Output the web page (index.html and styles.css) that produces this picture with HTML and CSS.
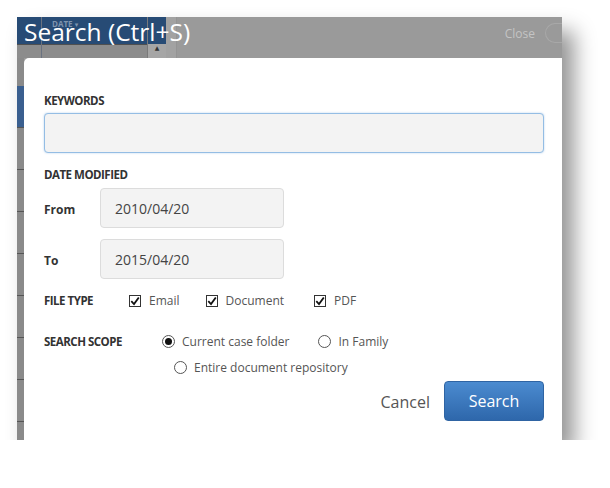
FILE: index.html
```html
<!DOCTYPE html>
<html>
   <head>
      <meta charset="UTF-8">
      <meta name="viewport" content="width=device-width, initial-scale=1.0"/>
      <title>Search</title>
      <link rel="stylesheet" href="styles.css">
   </head>
   <body>
      <div class="shot">
         <div class="top">
            <div class="app-head">
               <div class="app-grid">
                  <span class="col-date">DATE <span class="caret">&#9662;</span></span>
               </div>
               <div class="app-scroll"><span class="arrow">&#9650;</span></div>
               <div class="app-gap"></div>
            </div>
            <div class="title-bar">
               <h1>Search (Ctrl+S)</h1>
               <div class="close-wrap">
                  <span class="close">Close</span>
                  <span class="close-ring"></span>
               </div>
            </div>
         </div>

         <div class="main">
            <div class="app-rows">
               <div class="row"></div>
               <div class="row row-sel"></div>
               <div class="row"></div>
               <div class="row"></div>
               <div class="row"></div>
               <div class="row"></div>
               <div class="row"></div>
               <div class="row"></div>
               <div class="row"></div>
            </div>

            <form class="dialog">
               <label class="caption" for="keywords">KEYWORDS</label>
               <input id="keywords" class="field field-focus" type="text">

               <div class="caption caption-date">DATE MODIFIED</div>
               <div class="date-row">
                  <label class="sub" for="from">From</label>
                  <input id="from" class="field date" type="text" value="2010/04/20">
               </div>
               <div class="date-row">
                  <label class="sub sub-to" for="to">To</label>
                  <input id="to" class="field date" type="text" value="2015/04/20">
               </div>

               <div class="opt-row filetype">
                  <span class="caption caption-inline">FILE TYPE</span>
                  <label class="opt opt-email"><span class="box"><svg width="10" height="10" viewBox="0 0 10 10"><path d="M1.3 5.2 L4 8 L8.8 1.5" fill="none" stroke="#111" stroke-width="1.8"/></svg></span>Email</label>
                  <label class="opt opt-doc"><span class="box"><svg width="10" height="10" viewBox="0 0 10 10"><path d="M1.3 5.2 L4 8 L8.8 1.5" fill="none" stroke="#111" stroke-width="1.8"/></svg></span>Document</label>
                  <label class="opt"><span class="box"><svg width="10" height="10" viewBox="0 0 10 10"><path d="M1.3 5.2 L4 8 L8.8 1.5" fill="none" stroke="#111" stroke-width="1.8"/></svg></span>PDF</label>
               </div>

               <div class="opt-row scope">
                  <span class="caption caption-inline caption-scope">SEARCH SCOPE</span>
                  <label class="opt opt-current"><span class="radio on"></span>Current case folder</label>
                  <label class="opt"><span class="radio"></span>In Family</label>
               </div>
               <div class="opt-row scope-2">
                  <label class="opt"><span class="radio"></span>Entire document repository</label>
               </div>

               <div class="actions">
                  <button type="button" class="btn-cancel">Cancel</button>
                  <button type="button" class="btn-search">Search</button>
               </div>
            </form>
         </div>
      </div>
   </body>
</html>
```

FILE: styles.css
```css
*
{
   box-sizing: border-box;
}

body
{
   margin: 0;
   padding: 17px 0 0 17px;
   background: #ffffff;
   font-family: "Open Sans", "DejaVu Sans", sans-serif;
}

.shot
{
   width: 545px;
   height: 423px;
   background: #9a9a9a;
   box-shadow: 12px 14px 20px rgba(0, 0, 0, 0.42);
}

/* header: background app and the modal title share one grid cell */
.top
{
   display: grid;
   height: 41px;
}

.app-head,
.title-bar
{
   grid-area: 1 / 1;
}

.app-head
{
   display: flex;
}

.app-grid
{
   width: 131px;
   background: linear-gradient(#274b75 0, #274b75 27px, #505050 27px, #505050 28px, #8c8c8c 28px);
   border-right: 1px solid #7a7a7a;
   padding-left: 24px;
}

.col-date
{
   display: block;
   height: 100%;
   margin: 0;
   padding: 1px 0 0 10px;
   border-left: 1px solid #6a7280;
   font-size: 8px;
   font-weight: bold;
   color: #7f94ae;
}

.caret
{
   font-size: 7px;
}

.app-scroll
{
   width: 18px;
   background: linear-gradient(#274b75 0, #274b75 27px, #a6a6a6 27px);
   text-align: center;
}

.arrow
{
   display: block;
   margin-top: 27px;
   font-size: 6px;
   color: #333333;
}

.app-gap
{
   width: 11px;
   background: #a2a2a2;
   border-right: 1px solid #949494;
}

.title-bar
{
   position: relative;
   z-index: 1;
   display: flex;
   align-items: flex-start;
   justify-content: space-between;
   padding: 0 0 0 7px;
}

h1
{
   margin: 0;
   font-size: 24.5px;
   font-weight: normal;
   line-height: 30px;
   color: #ffffff;
}

.close-wrap
{
   display: flex;
   align-items: center;
   margin-top: 6px;
}

.close
{
   font-size: 12px;
   color: #c4c4c4;
   margin-right: 10px;
}

/* the close ring is cut by the right edge of the shot */
.close-ring
{
   width: 17px;
   height: 20px;
   border: 1px solid #a8a8a8;
   border-right: none;
   border-radius: 10px 0 0 10px;
}

.main
{
   display: flex;
   height: 382px;
}

.app-rows
{
   width: 7px;
   flex: none;
   background: #8a8a8a;
   display: flex;
   flex-direction: column;
}

.row
{
   height: 42px;
   flex: none;
   border-bottom: 1px solid #555555;
}

.row:first-child
{
   height: 28px;
   border-bottom: none;
}

.row-sel
{
   height: 42px;
   background: #3a5f8f;
   border-bottom: 1px solid #555555;
}

.dialog
{
   flex: 1;
   background: #ffffff;
   border-radius: 5px 0 0 0;
   padding: 35px 18px 0 20px;
   display: flex;
   flex-direction: column;
}

.caption
{
   display: block;
   font-size: 11.5px;
   font-weight: bold;
   color: #333333;
   letter-spacing: -0.5px;
   line-height: 16px;
}

.field
{
   display: block;
   border: 1px solid #dcdcdc;
   border-radius: 4px;
   background: #f3f3f3;
   font-family: "Open Sans", "DejaVu Sans", sans-serif;
   font-size: 14px;
   color: #444444;
   outline: none;
}

.field-focus
{
   margin-top: 4px;
   width: 500px;
   height: 40px;
   border-color: #94bde4;
   box-shadow: 0 0 2px rgba(100, 160, 220, 0.5);
}

.caption-date
{
   margin-top: 14px;
}

.date-row
{
   display: flex;
   align-items: flex-start;
   margin-top: 5px;
}

.date-row + .date-row
{
   margin-top: 11px;
}

.sub
{
   width: 56px;
   padding-top: 13px;
   font-size: 12px;
   font-weight: bold;
   color: #333333;
}

.sub-to
{
   padding-top: 13px;
}

.date
{
   width: 184px;
   height: 40px;
   padding: 0 14px;
}

.opt-row
{
   display: flex;
   align-items: center;
}

.filetype
{
   margin-top: 13px;
}

.caption-inline
{
   width: 85px;
}

.caption-scope
{
   width: 118px;
}

.opt
{
   display: flex;
   align-items: center;
   font-size: 12px;
   color: #555555;
   margin-right: 24px;
}

.opt-email
{
   margin-right: 26px;
}

.opt-doc
{
   margin-right: 30px;
}

.opt-current
{
   margin-right: 29px;
}

.box
{
   width: 12px;
   height: 12px;
   border: 1px solid #333333;
   margin-right: 8px;
   display: flex;
   align-items: center;
   justify-content: center;
}

.scope
{
   margin-top: 24px;
}

.scope-2
{
   margin-top: 9px;
   padding-left: 130px;
}

.radio
{
   width: 13px;
   height: 13px;
   border: 1px solid #555555;
   border-radius: 50%;
   margin-right: 7px;
   position: relative;
}

.radio.on::after
{
   content: "";
   position: absolute;
   left: 2px;
   top: 2px;
   width: 7px;
   height: 7px;
   border-radius: 50%;
   background: #111111;
}

.actions
{
   display: flex;
   justify-content: flex-end;
   align-items: center;
   margin-top: 5px;
}

.btn-cancel
{
   border: none;
   background: none;
   font-family: "Open Sans", "DejaVu Sans", sans-serif;
   font-size: 16px;
   color: #555555;
   padding: 0;
   margin: 2px 14px 0 0;
}

.btn-search
{
   width: 100px;
   height: 40px;
   border: 1px solid #2f64a3;
   border-radius: 4px;
   background: linear-gradient(#4b8bd0, #2e67ab);
   color: #ffffff;
   font-family: "Open Sans", "DejaVu Sans", sans-serif;
   font-size: 16px;
}
```
